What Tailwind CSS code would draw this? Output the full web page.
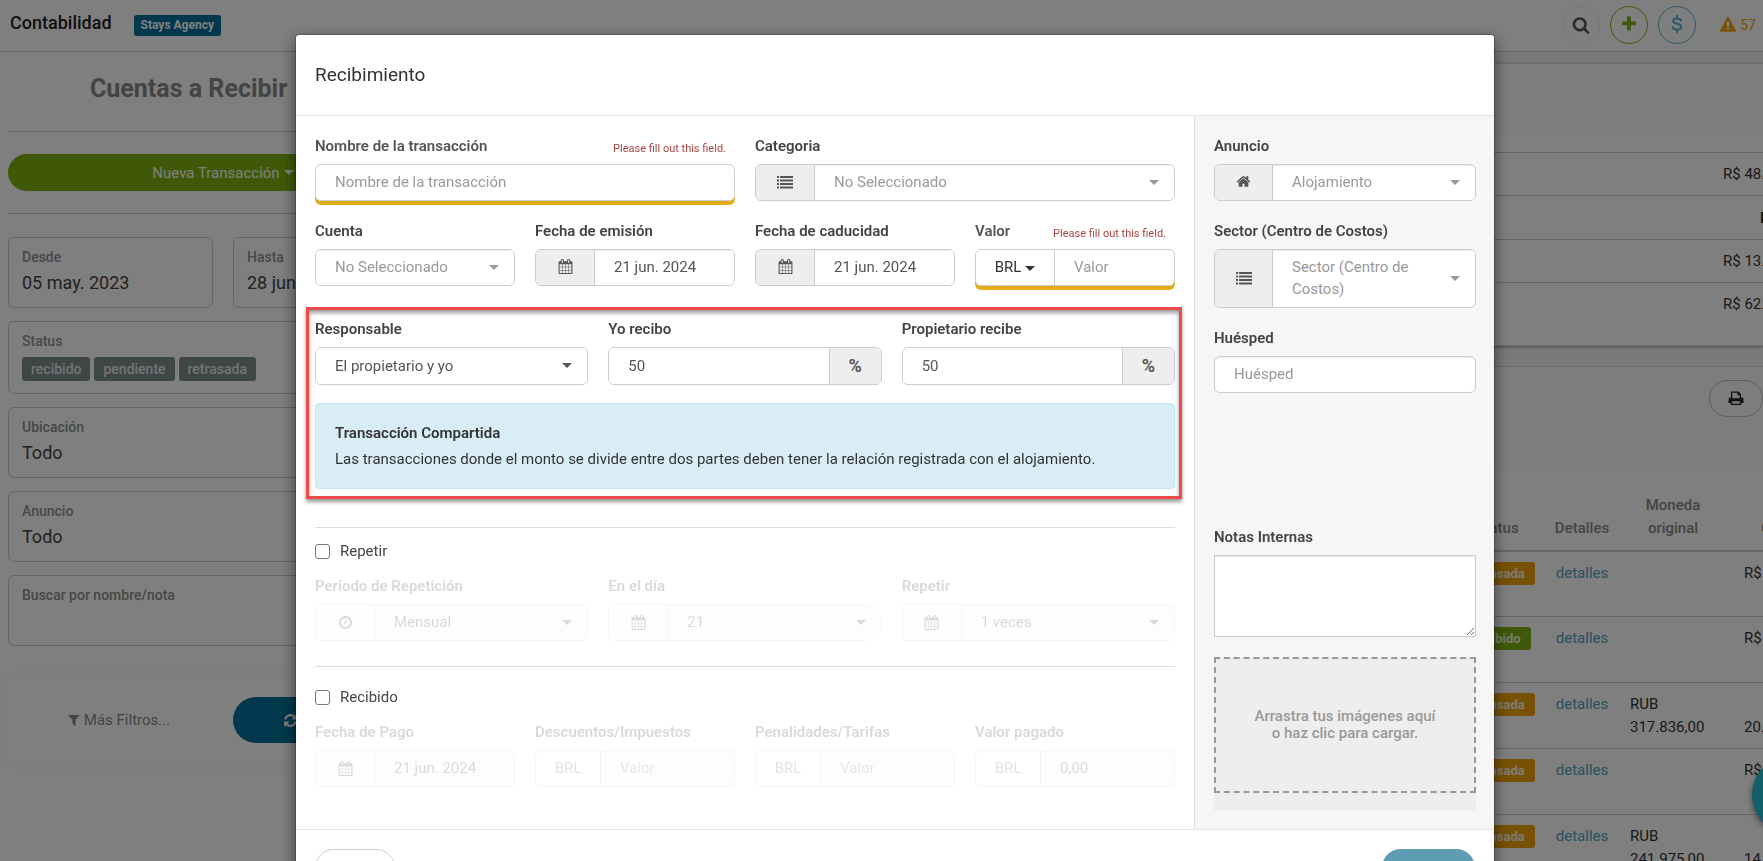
<!DOCTYPE html>
<html lang="es">

<head>
    <meta charset="UTF-8">
    <meta name="viewport" content="width=device-width, initial-scale=1.0">
    <title>Contabilidad - Recibimiento</title>
    <script src="https://cdn.jsdelivr.net/npm/@tailwindcss/browser@4"></script>
</head>

<body class="h-screen overflow-hidden bg-white font-['Roboto','Liberation_Sans',sans-serif] text-[15px] leading-[22px] text-[#444]">
    <!-- Icons -->
    <svg class="hidden" xmlns="http://www.w3.org/2000/svg">
        <symbol id="i-search" viewBox="0 0 1792 1792"><path d="M1216 832q0-185-131.5-316.5T768 384 451.500 515.500 320 832t131.500 316.500T768 1280t316.500-131.500T1216 832zm512 832q0 52-38 90t-90 38q-54 0-90-38l-343-342q-179 124-399 124-143 0-273.500-55.500t-225-150-150-225T64 832t55.500-273.500 150-225 225-150T768 128t273.500 55.500 225 150 150 225T1472 832q0 220-124 399l343 343q37 37 37 90z"/></symbol>
        <symbol id="i-plus" viewBox="0 0 1792 1792"><path d="M1600 736v192q0 40-28 68t-68 28h-416v416q0 40-28 68t-68 28H800q-40 0-68-28t-28-68v-416H288q-40 0-68-28t-28-68V736q0-40 28-68t68-28h416V224q0-40 28-68t68-28h192q40 0 68 28t28 68v416h416q40 0 68 28t28 68z"/></symbol>
        <symbol id="i-usd" viewBox="0 0 16 20"><path d="M12.500 6.300C12 4.600 10.400 3.800 8 3.800c-2.600 0-4.300 1-4.300 2.900C3.700 10.700 12.600 8.700 12.600 13c0 2-1.800 3.200-4.600 3.200-2.600 0-4.400-1-4.900-2.900M8 1v3M8 16v3" fill="none" stroke="currentColor" stroke-width="2.300" stroke-linecap="round"/></symbol>
        <symbol id="i-warning" viewBox="0 0 1792 1792"><path d="M1024 1375v-190q0-14-9.500-23.500T992 1152H800q-13 0-22.500 9.500T768 1185v190q0 14 9.500 23.500t22.500 9.500h192q13 0 22.500-9.500t9.500-23.500zm-2-374l18-459q0-12-10-19-13-11-24-11H786q-11 0-24 11-10 7-10 21l17 457q0 10 10 16.500t24 6.500h185q14 0 23.500-6.500t10.500-16.500zm-14-934l768 1408q35 63-2 126-17 29-46.500 46t-63.500 17H128q-34 0-63.500-17T18 1601q-37-63-2-126L784 67q17-31 47-49t65-18 65 18 47 49z"/></symbol>
        <symbol id="i-filter" viewBox="0 0 1792 1792"><path d="M1595 295q17 41-14 70l-493 493v742q0 42-39 59-13 5-25 5-27 0-45-19l-256-256q-19-19-19-45V858L211 365q-31-29-14-70 17-39 59-39h1280q42 0 59 39z"/></symbol>
        <symbol id="i-refresh" viewBox="0 0 1792 1792"><path d="M1639 1056q0 5-1 7-64 268-268 434.500T892 1664q-146 0-282.500-55T366 1452l-129 129q-19 19-45 19t-45-19-19-45v-448q0-26 19-45t45-19h448q26 0 45 19t19 45-19 45l-137 137q71 66 161 102t187 36q134 0 250-65t186-179q11-17 53-117 8-23 30-23h192q13 0 22.500 9.500t9.500 22.500zm25-800v448q0 26-19 45t-45 19h-448q-26 0-45-19t-19-45 19-45l138-138q-148-137-349-137-134 0-250 65T460 628q-11 17-53 117-8 23-30 23H178q-13 0-22.500-9.500T146 736v-7q65-268 270-434.500T896 128q146 0 284 55.500T1425 340l130-129q19-19 45-19t45 19 19 45z"/></symbol>
        <symbol id="i-clock" viewBox="0 0 1792 1792"><path d="M1024 544v448q0 14-9 23t-23 9H672q-14 0-23-9t-9-23v-64q0-14 9-23t23-9h224V544q0-14 9-23t23-9h64q14 0 23 9t9 23zm416 352q0-148-73-273t-198-198-273-73-273 73-198 198-73 273 73 273 198 198 273 73 273-73 198-198 73-273zm224 0q0 209-103 385.500T1281.500 1561 896 1664t-385.500-103T231 1281.500 128 896t103-385.500T510.500 231 896 128t385.500 103T1561 510.500 1664 896z"/></symbol>
        <symbol id="i-calendar" viewBox="0 0 1792 1792"><path d="M192 1664h288v-288H192v288zm352 0h320v-288H544v288zM192 1312h288V992H192v320zm352 0h320V992H544v320zM192 928h288V640H192v288zm736 736h320v-288H928v288zM544 928h320V640H544v288zm768 736h288v-288h-288v288zM928 1312h320V992H928v320zM576 448V160q0-13-9.500-22.500T544 128h-64q-13 0-22.500 9.500T448 160v288q0 13 9.500 22.500T480 480h64q13 0 22.500-9.500T576 448zm736 864h288V992h-288v320zM928 928h320V640H928v288zm384 0h288V640h-288v288zm32-480V160q0-13-9.500-22.500T1312 128h-64q-13 0-22.500 9.500T1216 160v288q0 13 9.500 22.500t22.500 9.500h64q13 0 22.500-9.500t9.500-22.500zm384-64v1280q0 52-38 90t-90 38H192q-52 0-90-38t-38-90V384q0-52 38-90t90-38h128v-96q0-66 47-113T480 0h64q66 0 113 47t47 113v96h384v-96q0-66 47-113t113-47h64q66 0 113 47t47 113v96h128q52 0 90 38t38 90z"/></symbol>
        <symbol id="i-home" viewBox="0 0 1792 1792"><path d="M1472 992v480q0 26-19 45t-45 19h-384v-384H768v384H384q-26 0-45-19t-19-45V992q0-1 .5-3t.5-3l575-474 575 474q1 2 1 6zm223-69l-62 74q-8 9-21 11h-3q-13 0-21-7L896 424l-692 577q-12 8-24 7-13-2-21-11l-62-74q-8-10-7-23.500t11-21.500l719-599q32-26 76-26t76 26l244 204V288q0-14 9-23t23-9h192q14 0 23 9t9 23v408l219 182q10 8 11 21.500t-7 23.500z"/></symbol>
        <symbol id="i-list" viewBox="0 0 16 14"><path d="M0 1h2v2H0zM0 4.500h2v2H0zM0 8h2v2H0zM0 11.500h2v2H0zM3 1h13v2H3zM3 4.500h13v2H3zM3 8h13v2H3zM3 11.500h13v2H3z"/></symbol>
        <symbol id="i-print" viewBox="0 0 16 16"><path fill-rule="evenodd" d="M3 1.500h7.500L13 4v3.500h.8A1.700 1.700 0 0 1 15.500 9v4h-2.300v2H2.800v-2H.5V9.200A1.700 1.700 0 0 1 2.200 7.500H3zM4.300 2.700v5.500h7.400V5.200H9.400V2.700zM4.200 11.300v2.500h7.600v-2.500z"/></symbol>
        <symbol id="i-caret" viewBox="0 0 10 5"><path d="M0 0h10L5 5z"/></symbol>
    </svg>

    <!-- Top bar -->
    <header class="flex h-[52px] items-center border-b border-[#ccc] pl-[10px] pr-[7px]">
        <h1 class="pb-[5px] text-[18px] font-medium text-[#222]">Contabilidad</h1>
        <span class="ml-[22px] rounded-[3px] bg-[#05719a] px-[7px] text-[12px] font-bold leading-[21px] text-white">Stays Agency</span>
        <div class="ml-auto flex items-center gap-[10px] pb-px">
            <button aria-label="Buscar" class="flex size-[38px] items-center justify-center rounded-full border border-[#f0f0f0] text-[#555]"><svg class="size-[18px] fill-current"><use href="#i-search"/></svg></button>
            <button aria-label="Agregar" class="flex size-[38px] items-center justify-center rounded-full border border-[#7fb311] text-[#7fb311]"><svg class="mb-[3px] size-[18px] fill-current"><use href="#i-plus"/></svg></button>
            <button aria-label="Moneda" class="flex size-[38px] items-center justify-center rounded-full border border-[#5ab4d8] text-[#5ab4d8]"><svg class="mb-[3px] h-[18px] w-4"><use href="#i-usd"/></svg></button>
            <a href="#" class="ml-[14px] flex items-center gap-1 text-[14px] text-[#f0a30a]"><svg class="size-4 fill-current"><use href="#i-warning"/></svg>57</a>
        </div>
    </header>

    <div class="flex">
        <!-- Filters -->
        <aside class="w-[446px] shrink-0 px-2">
            <h2 class="border-b border-[#ccc] pb-[26px] pl-[82px] pt-[21px] text-[25px] font-bold leading-8 text-[#888]">Cuentas a Recibir</h2>
            <div class="border-b border-[#ccc] py-[22px]">
                <button class="flex h-[37px] w-full items-center justify-center gap-1 rounded-full bg-[#7fb311] text-white">Nueva Transacción <svg class="h-[5px] w-[10px] fill-current"><use href="#i-caret"/></svg></button>
            </div>
            <div class="mt-[23px] grid grid-cols-2 gap-x-5 gap-y-[13px]">
                <div class="h-[71px] rounded-md border border-[#ccc] px-[13px] pt-2">
                    <div class="text-[14px] font-medium text-[#8c9090]">Desde</div>
                    <div class="mt-1 text-[18px]">05 may. 2023</div>
                </div>
                <div class="h-[71px] rounded-md border border-[#ccc] px-[13px] pt-2">
                    <div class="text-[14px] font-medium text-[#8c9090]">Hasta</div>
                    <div class="mt-1 text-[18px]">28 jun. 2024</div>
                </div>
                <div class="col-span-2 h-[73px] rounded-md border border-[#ccc] px-[13px] pt-2">
                    <div class="text-[14px] font-medium text-[#8c9090]">Status</div>
                    <div class="mt-[5px] flex gap-1 text-[14px] font-medium leading-6 text-white/80">
                        <span class="rounded-[3px] bg-[#7f8c8d] px-[9px]">recibido</span>
                        <span class="rounded-[3px] bg-[#7f8c8d] px-[9px]">pendiente</span>
                        <span class="rounded-[3px] bg-[#7f8c8d] px-[9px]">retrasada</span>
                    </div>
                </div>
                <div class="col-span-2 h-[71px] rounded-md border border-[#ccc] px-[13px] pt-2">
                    <div class="text-[14px] font-medium text-[#8c9090]">Ubicación</div>
                    <div class="mt-1 text-[18px]">Todo</div>
                </div>
                <div class="col-span-2 h-[71px] rounded-md border border-[#ccc] px-[13px] pt-2">
                    <div class="text-[14px] font-medium text-[#8c9090]">Anuncio</div>
                    <div class="mt-1 text-[18px]">Todo</div>
                </div>
                <div class="col-span-2 h-[71px] rounded-md border border-[#ccc] px-[13px] pt-2">
                    <label for="buscar" class="block text-[14px] font-medium text-[#8c9090]">Buscar por nombre/nota</label>
                    <input id="buscar" type="text" class="w-full outline-none">
                </div>
            </div>
            <div class="mt-8 grid grid-cols-2 gap-5 py-[19px] shadow-[0_0_16px_rgba(0,0,0,0.06)]">
                <button class="flex h-[46px] items-center justify-center gap-[3px] pl-4 text-[#888]"><svg class="size-[14px] fill-current"><use href="#i-filter"/></svg>Más Filtros...</button>
                <button aria-label="Actualizar" class="flex h-[46px] items-center rounded-full bg-[#05719a] pl-[50px] text-white"><svg class="size-[15px] fill-current"><use href="#i-refresh"/></svg></button>
            </div>
        </aside>

        <!-- Totals and transactions -->
        <main class="h-screen min-w-0 flex-1 bg-[#f3f3f3] pt-[11px]">
            <section class="border-y border-[#d9d9d9] bg-white shadow-[0_1px_3px_rgba(0,0,0,0.4)]">
                <div class="h-[70px] bg-[#fafafa]"></div>
                <table class="mt-[18px] w-full table-fixed text-[#333]">
                    <tbody>
                        <tr class="h-[43px] border-t border-[#ccc]"><td></td><td class="w-10 whitespace-nowrap">R$ 48.</td></tr>
                        <tr class="h-[44px] border-t border-[#ccc]"><td></td><td class="w-10 whitespace-nowrap pl-[37px] font-bold">R$</td></tr>
                        <tr class="h-[43px] border-t border-[#ccc]"><td></td><td class="w-10 whitespace-nowrap">R$ 13.</td></tr>
                        <tr class="h-[43px] border-t border-[#ccc]"><td></td><td class="w-10 whitespace-nowrap">R$ 62.</td></tr>
                    </tbody>
                </table>
                <div class="h-[19px]"></div>
            </section>

            <section class="mt-5 border-t border-[#d9d9d9] bg-white">
                <div class="flex h-[100px] justify-end bg-[#fafafa] pt-[13px]">
                    <button aria-label="Imprimir" class="flex h-[37px] w-[54px] items-center justify-center rounded-full border border-[#bbb] text-[#222]"><svg class="size-4 fill-current"><use href="#i-print"/></svg></button>
                </div>
                <table class="mt-[14px] w-full table-fixed text-[#333]">
                    <thead>
                        <tr class="h-[70px] border-b-2 border-[#ccc] align-bottom leading-[23px] text-[#888]">
                            <th></th>
                            <th class="w-[100px] pb-[10px] font-medium">Status</th>
                            <th class="w-[70px] pb-[10px] font-medium">Detalles</th>
                            <th class="w-[112px] pb-[10px] font-medium">Moneda<br>original</th>
                            <th class="w-[34px] pb-[10px] pl-8 text-left font-medium">Cambio</th>
                        </tr>
                    </thead>
                    <tbody class="leading-[23px]">
                        <tr class="h-[66px] border-b border-[#ccc] align-top">
                            <td></td>
                            <td class="pt-[10px] text-center"><span class="inline-block rounded-[3px] bg-[#f0a30a] px-[10px] text-[13px] font-bold text-white/90">retrasada</span></td>
                            <td class="pt-[10px] text-center"><a href="#" class="text-[#4fa3c0]">detalles</a></td>
                            <td class="pl-[13px] pt-[10px]"></td>
                            <td class="whitespace-nowrap pl-[15px] pt-[10px]">R$</td>
                        </tr>
                        <tr class="h-[66px] border-b border-[#ccc] align-top">
                            <td></td>
                            <td class="pt-[10px] text-center"><span class="inline-block rounded-[3px] bg-[#7fb311] px-[10px] text-[13px] font-bold text-white/90">recibido</span></td>
                            <td class="pt-[10px] text-center"><a href="#" class="text-[#4fa3c0]">detalles</a></td>
                            <td class="pl-[13px] pt-[10px]"></td>
                            <td class="whitespace-nowrap pl-[15px] pt-[10px]">R$</td>
                        </tr>
                        <tr class="h-[66px] border-b border-[#ccc] align-top">
                            <td></td>
                            <td class="pt-[10px] text-center"><span class="inline-block rounded-[3px] bg-[#f0a30a] px-[10px] text-[13px] font-bold text-white/90">retrasada</span></td>
                            <td class="pt-[10px] text-center"><a href="#" class="text-[#4fa3c0]">detalles</a></td>
                            <td class="pl-[13px] pt-[10px]">RUB<br>317.836,00</td>
                            <td class="whitespace-nowrap pl-[15px] pt-[10px]"><br>20.</td>
                        </tr>
                        <tr class="h-[66px] border-b border-[#ccc] align-top">
                            <td></td>
                            <td class="pt-[10px] text-center"><span class="inline-block rounded-[3px] bg-[#f0a30a] px-[10px] text-[13px] font-bold text-white/90">retrasada</span></td>
                            <td class="pt-[10px] text-center"><a href="#" class="text-[#4fa3c0]">detalles</a></td>
                            <td class="pl-[13px] pt-[10px]"></td>
                            <td class="whitespace-nowrap pl-[15px] pt-[10px]">R$</td>
                        </tr>
                        <tr class="h-[66px] border-b border-[#ccc] align-top">
                            <td></td>
                            <td class="pt-[10px] text-center"><span class="inline-block rounded-[3px] bg-[#f0a30a] px-[10px] text-[13px] font-bold text-white/90">retrasada</span></td>
                            <td class="pt-[10px] text-center"><a href="#" class="text-[#4fa3c0]">detalles</a></td>
                            <td class="pl-[13px] pt-[10px]">RUB<br>241.975,00</td>
                            <td class="whitespace-nowrap pl-[15px] pt-[10px]"><br>14.</td>
                        </tr>
                    </tbody>
                </table>
            </section>
        </main>
    </div>

    <!-- Chat bubble -->
    <button aria-label="Chat" class="fixed -right-[69px] bottom-[26px] size-20 rounded-full bg-[#26bed4] shadow-[0_2px_6px_rgba(0,0,0,0.5)]"></button>

    <!-- Modal -->
    <div class="fixed inset-0 overflow-hidden bg-black/50 pl-[295px] pr-[268px] pt-[34px]">
        <div role="dialog" aria-labelledby="modal-title" class="rounded-[4px] border border-black/20 bg-white bg-clip-padding shadow-[0_5px_15px_rgba(0,0,0,0.5)]">
            <div class="border-b border-[#e5e5e5] px-[19px] py-7">
                <h3 id="modal-title" class="text-[19px] leading-6 text-[#333]">Recibimiento</h3>
            </div>

            <form class="flex">
                <div class="min-w-0 flex-1 px-[19px] pb-[42px] pt-[19px]">
                    <div class="grid grid-cols-4 gap-x-5 gap-y-[19px]">
                        <div class="col-span-2">
                            <div class="mb-[7px] flex items-end justify-between pr-[9px]">
                                <label for="nombre" class="font-semibold text-[#555]">Nombre de la transacción</label>
                                <span class="text-[11px] leading-4 text-[#a94442]">Please fill out this field.</span>
                            </div>
                            <div class="h-[37px] rounded-md border border-[#ccc] shadow-[0_4px_0_#e2ac14]">
                                <input id="nombre" type="text" placeholder="Nombre de la transacción" class="h-full w-full rounded-md bg-white px-[19px] pb-[2px] outline-none placeholder:text-[#999]">
                            </div>
                        </div>
                        <div class="col-span-2">
                            <label for="categoria" class="mb-[7px] block font-semibold">Categoria</label>
                            <div class="flex h-[37px] overflow-hidden rounded-md border border-[#ccc]">
                                <span class="flex w-[59px] shrink-0 items-center justify-center border-r border-[#ccc] bg-[#eee] pb-[2px] text-[#555]"><svg class="h-[14px] w-4 fill-current"><use href="#i-list"/></svg></span>
                                <div class="relative flex-1 text-[#999]">
                                    <select id="categoria" class="h-full w-full appearance-none bg-white px-[19px] pb-[2px] shadow-[inset_0_1px_1px_rgba(0,0,0,0.075)] outline-none"><option>No Seleccionado</option></select>
                                    <svg class="pointer-events-none absolute right-[15px] top-[15px] h-[5px] w-[10px] fill-current"><use href="#i-caret"/></svg>
                                </div>
                            </div>
                        </div>

                        <div>
                            <label for="cuenta" class="mb-[7px] block font-semibold">Cuenta</label>
                            <div class="relative h-[37px] overflow-hidden rounded-md border border-[#ccc] text-[#999]">
                                <select id="cuenta" class="h-full w-full appearance-none bg-white px-[19px] pb-[2px] shadow-[inset_0_1px_1px_rgba(0,0,0,0.075)] outline-none"><option>No Seleccionado</option></select>
                                <svg class="pointer-events-none absolute right-[15px] top-[15px] h-[5px] w-[10px] fill-current"><use href="#i-caret"/></svg>
                            </div>
                        </div>
                        <div>
                            <label for="emision" class="mb-[7px] block font-semibold">Fecha de emisión</label>
                            <div class="flex h-[37px] overflow-hidden rounded-md border border-[#ccc]">
                                <span class="flex w-[59px] shrink-0 items-center justify-center border-r border-[#ccc] bg-[#eee] pb-[2px] text-[#555]"><svg class="size-[15px] fill-current"><use href="#i-calendar"/></svg></span>
                                <input id="emision" type="text" value="21 jun. 2024" class="min-w-0 flex-1 bg-white px-[19px] pb-[2px] text-[#555] shadow-[inset_0_1px_1px_rgba(0,0,0,0.075)] outline-none">
                            </div>
                        </div>
                        <div>
                            <label for="caducidad" class="mb-[7px] block font-semibold">Fecha de caducidad</label>
                            <div class="flex h-[37px] overflow-hidden rounded-md border border-[#ccc]">
                                <span class="flex w-[59px] shrink-0 items-center justify-center border-r border-[#ccc] bg-[#eee] pb-[2px] text-[#555]"><svg class="size-[15px] fill-current"><use href="#i-calendar"/></svg></span>
                                <input id="caducidad" type="text" value="21 jun. 2024" class="min-w-0 flex-1 bg-white px-[19px] pb-[2px] text-[#555] shadow-[inset_0_1px_1px_rgba(0,0,0,0.075)] outline-none">
                            </div>
                        </div>
                        <div>
                            <div class="mb-[7px] flex items-end justify-between pr-[9px]">
                                <label for="valor" class="font-semibold text-[#555]">Valor</label>
                                <span class="text-[11px] leading-4 text-[#a94442]">Please fill out this field.</span>
                            </div>
                            <div class="flex h-[37px] rounded-md border border-[#ccc] shadow-[0_4px_0_#e2ac14]">
                                <button type="button" class="flex w-[79px] shrink-0 items-center justify-center gap-1 rounded-l-md border-r border-[#ccc] bg-white pb-[2px] text-[#333]">BRL <svg class="mt-1 h-[5px] w-[10px] fill-current"><use href="#i-caret"/></svg></button>
                                <input id="valor" type="text" placeholder="Valor" class="min-w-0 flex-1 rounded-r-md bg-white px-[19px] pb-[2px] outline-none placeholder:text-[#999]">
                            </div>
                        </div>
                    </div>

                    <!-- Shared transaction -->
                    <div class="relative mt-8">
                        <div class="grid grid-cols-3 gap-5">
                            <div>
                                <label for="responsable" class="mb-[7px] block font-semibold">Responsable</label>
                                <div class="relative h-[38px] overflow-hidden rounded-md border border-[#ccc] text-[#555]">
                                    <select id="responsable" class="h-full w-full appearance-none bg-white px-[19px] outline-none"><option>El propietario y yo</option></select>
                                    <svg class="pointer-events-none absolute right-[15px] top-[15px] h-[5px] w-[10px] fill-current"><use href="#i-caret"/></svg>
                                </div>
                            </div>
                            <div>
                                <label for="yo-recibo" class="mb-[7px] block font-semibold">Yo recibo</label>
                                <div class="flex h-[38px] overflow-hidden rounded-md border border-[#ccc] text-[#555]">
                                    <input id="yo-recibo" type="text" value="50" class="min-w-0 flex-1 bg-white px-[19px] outline-none">
                                    <span class="flex w-[52px] shrink-0 items-center justify-center border-l border-[#ccc] bg-[#eee] text-[18px] font-bold">%</span>
                                </div>
                            </div>
                            <div>
                                <label for="prop-recibe" class="mb-[7px] block font-semibold">Propietario recibe</label>
                                <div class="flex h-[38px] overflow-hidden rounded-md border border-[#ccc] text-[#555]">
                                    <input id="prop-recibe" type="text" value="50" class="min-w-0 flex-1 bg-white px-[19px] outline-none">
                                    <span class="flex w-[52px] shrink-0 items-center justify-center border-l border-[#ccc] bg-[#eee] text-[18px] font-bold">%</span>
                                </div>
                            </div>
                        </div>
                        <div class="mt-[18px] rounded-[4px] border border-[#bce8f1] bg-[#d9edf7] px-[19px] py-[18px] text-[#333]">
                            <strong class="block font-semibold">Transacción Compartida</strong>
                            <p class="mt-1">Las transacciones donde el monto se divide entre dos partes deben tener la relación registrada con el alojamiento.</p>
                        </div>
                        <!-- Highlight frame -->
                        <div class="pointer-events-none absolute -bottom-[10px] -left-[9px] -right-[7px] -top-[11px] border-[3px] border-[#ef4a4a] shadow-[0_3px_4px_rgba(0,0,0,0.4),inset_0_3px_4px_rgba(0,0,0,0.4)]"></div>
                    </div>

                    <hr class="mb-3 mt-[38px] border-[#ddd]">
                    <label class="flex items-center gap-[10px]"><input type="checkbox" class="size-[15px] appearance-none rounded-[3px] border border-[#767676] bg-white">Repetir</label>
                    <fieldset disabled class="mt-[13px] grid grid-cols-3 gap-5 opacity-20">
                        <div>
                            <label for="periodo" class="mb-[7px] block font-semibold">Periodo de Repetición</label>
                            <div class="flex h-[37px] overflow-hidden rounded-md border border-[#ccc]">
                                <span class="flex w-[59px] shrink-0 items-center justify-center border-r border-[#ccc] bg-[#f7f7f7]"><svg class="size-[15px] fill-current"><use href="#i-clock"/></svg></span>
                                <div class="relative flex-1">
                                    <select id="periodo" class="h-full w-full appearance-none bg-[#f4f4f4] px-[19px] pb-[2px] opacity-100"><option>Mensual</option></select>
                                    <svg class="pointer-events-none absolute right-[15px] top-[15px] h-[5px] w-[10px] fill-current"><use href="#i-caret"/></svg>
                                </div>
                            </div>
                        </div>
                        <div>
                            <label for="dia" class="mb-[7px] block font-semibold">En el día</label>
                            <div class="flex h-[37px] overflow-hidden rounded-l-md rounded-r-[18px] border border-[#ccc]">
                                <span class="flex w-[59px] shrink-0 items-center justify-center border-r border-[#ccc] bg-[#f7f7f7]"><svg class="size-[15px] fill-current"><use href="#i-calendar"/></svg></span>
                                <div class="relative flex-1">
                                    <select id="dia" class="h-full w-full appearance-none bg-[#f4f4f4] px-[19px] pb-[2px] opacity-100"><option>21</option></select>
                                    <svg class="pointer-events-none absolute right-[15px] top-[15px] h-[5px] w-[10px] fill-current"><use href="#i-caret"/></svg>
                                </div>
                            </div>
                        </div>
                        <div>
                            <label for="veces" class="mb-[7px] block font-semibold">Repetir</label>
                            <div class="flex h-[37px] overflow-hidden rounded-md border border-[#ccc]">
                                <span class="flex w-[59px] shrink-0 items-center justify-center border-r border-[#ccc] bg-[#f7f7f7]"><svg class="size-[15px] fill-current"><use href="#i-calendar"/></svg></span>
                                <div class="relative flex-1">
                                    <select id="veces" class="h-full w-full appearance-none bg-[#f4f4f4] px-[19px] pb-[2px] opacity-100"><option>1 veces</option></select>
                                    <svg class="pointer-events-none absolute right-[15px] top-[15px] h-[5px] w-[10px] fill-current"><use href="#i-caret"/></svg>
                                </div>
                            </div>
                        </div>
                    </fieldset>

                    <hr class="mb-[19px] mt-[25px] border-[#ddd]">
                    <label class="flex items-center gap-[10px]"><input type="checkbox" class="size-[15px] appearance-none rounded-[3px] border border-[#767676] bg-white">Recibido</label>
                    <fieldset disabled class="mt-[13px] grid grid-cols-4 gap-5 opacity-20">
                        <div>
                            <label for="pago" class="mb-[7px] block font-semibold">Fecha de Pago</label>
                            <div class="flex h-[37px] overflow-hidden rounded-md border border-[#ccc]">
                                <span class="flex w-[59px] shrink-0 items-center justify-center border-r border-[#ccc] bg-[#f7f7f7]"><svg class="size-[15px] fill-current"><use href="#i-calendar"/></svg></span>
                                <input id="pago" type="text" value="21 jun. 2024" class="min-w-0 flex-1 bg-[#f4f4f4] px-[19px] pb-[2px]">
                            </div>
                        </div>
                        <div>
                            <label for="descuentos" class="mb-[7px] block font-semibold">Descuentos/Impuestos</label>
                            <div class="flex h-[37px] overflow-hidden rounded-md border border-[#ccc]">
                                <span class="flex w-[65px] shrink-0 items-center justify-center border-r border-[#ccc] pb-[2px] text-[#777]">BRL</span>
                                <input id="descuentos" type="text" placeholder="Valor" class="min-w-0 flex-1 bg-[#f4f4f4] px-[19px] pb-[2px] placeholder:text-[#888]">
                            </div>
                        </div>
                        <div>
                            <label for="penalidades" class="mb-[7px] block font-semibold">Penalidades/Tarifas</label>
                            <div class="flex h-[37px] overflow-hidden rounded-md border border-[#ccc]">
                                <span class="flex w-[65px] shrink-0 items-center justify-center border-r border-[#ccc] pb-[2px] text-[#777]">BRL</span>
                                <input id="penalidades" type="text" placeholder="Valor" class="min-w-0 flex-1 bg-[#f4f4f4] px-[19px] pb-[2px] placeholder:text-[#888]">
                            </div>
                        </div>
                        <div>
                            <label for="pagado" class="mb-[7px] block font-semibold">Valor pagado</label>
                            <div class="flex h-[37px] overflow-hidden rounded-md border border-[#ccc]">
                                <span class="flex w-[65px] shrink-0 items-center justify-center border-r border-[#ccc] pb-[2px] text-[#777]">BRL</span>
                                <input id="pagado" type="text" value="0,00" class="min-w-0 flex-1 bg-[#f4f4f4] px-[19px] pb-[2px]">
                            </div>
                        </div>
                    </fieldset>
                </div>

                <!-- Side panel -->
                <div class="flex w-[300px] shrink-0 flex-col border-l border-[#ddd] bg-[#f6f6f6] pb-[18px] pl-[19px] pr-[18px] pt-[19px]">
                    <label for="anuncio" class="mb-[7px] block font-semibold">Anuncio</label>
                    <div class="flex h-[37px] overflow-hidden rounded-md border border-[#ccc]">
                        <span class="flex w-[58px] shrink-0 items-center justify-center border-r border-[#ccc] bg-[#eee] pb-[2px] text-[#555]"><svg class="size-[15px] fill-current"><use href="#i-home"/></svg></span>
                        <div class="relative flex-1 text-[#999]">
                            <select id="anuncio" class="h-full w-full appearance-none bg-white px-[19px] pb-[2px] shadow-[inset_0_1px_1px_rgba(0,0,0,0.075)] outline-none"><option>Alojamiento</option></select>
                            <svg class="pointer-events-none absolute right-[15px] top-[15px] h-[5px] w-[10px] fill-current"><use href="#i-caret"/></svg>
                        </div>
                    </div>

                    <label for="sector" class="mb-[7px] mt-[19px] block font-semibold">Sector (Centro de Costos)</label>
                    <div class="flex overflow-hidden rounded-md border border-[#ccc]">
                        <span class="flex w-[58px] shrink-0 items-center justify-center border-r border-[#ccc] bg-[#eee] pb-[2px] text-[#555]"><svg class="h-[14px] w-4 fill-current"><use href="#i-list"/></svg></span>
                        <div class="relative flex flex-1 items-center bg-white pb-[7px] pl-[19px] pr-[15px] pt-[6px] text-[#999] shadow-[inset_0_1px_1px_rgba(0,0,0,0.075)]">
                            <span class="flex-1 pr-7">Sector (Centro de Costos)</span>
                            <svg class="h-[5px] w-[10px] fill-current"><use href="#i-caret"/></svg>
                            <select id="sector" class="absolute inset-0 h-full w-full opacity-0"><option>Sector (Centro de Costos)</option></select>
                        </div>
                    </div>

                    <label for="huesped" class="mb-[7px] mt-[19px] block font-semibold">Huésped</label>
                    <input id="huesped" type="text" placeholder="Huésped" class="h-[37px] rounded-md border border-[#ccc] bg-white px-[19px] pb-[2px] shadow-[inset_0_1px_1px_rgba(0,0,0,0.075)] outline-none placeholder:text-[#999]">

                    <label for="notas" class="mb-[7px] mt-auto block font-semibold">Notas Internas</label>
                    <textarea id="notas" class="block h-[82px] w-full resize-y border border-[#ccc] bg-white shadow-[inset_0_1px_1px_rgba(0,0,0,0.075)] outline-none"></textarea>
                    <div class="mt-5 bg-[#eee] pb-[18px]">
                        <label for="imagenes" class="flex h-[136px] items-center justify-center border-2 border-dashed border-[#999] px-8 text-center font-medium leading-[17px] text-[#999]">Arrastra tus imágenes aquí<br>o haz clic para cargar.</label>
                        <input id="imagenes" type="file" class="sr-only">
                    </div>
                </div>
            </form>

            <div class="flex justify-between border-t border-[#e5e5e5] px-[19px] py-[19px]">
                <button type="button" aria-label="Cerrar" class="h-[37px] w-[80px] rounded-full border border-[#ccc] bg-white"></button>
                <button type="button" aria-label="Guardar" class="h-[37px] w-[93px] rounded-full bg-[#5f9db5]"></button>
            </div>
        </div>
    </div>
</body>

</html>
